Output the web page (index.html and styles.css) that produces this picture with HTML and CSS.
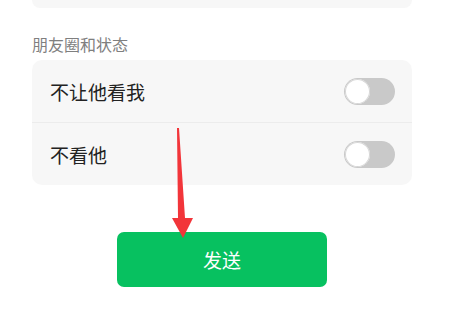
FILE: index.html
```html
<!DOCTYPE html>
<html lang="zh">
<head>
<meta charset="utf-8">
<link rel="stylesheet" href="styles.css">
</head>
<body>
<div class="page">
  <div class="card card-top"></div>
  <div class="section-label">朋友圈和状态</div>
  <div class="card">
    <div class="row">
      <span class="row-text">不让他看我</span>
      <span class="switch"><span class="knob"></span></span>
    </div>
    <div class="row">
      <span class="row-text">不看他</span>
      <span class="switch"><span class="knob"></span></span>
    </div>
  </div>
  <div class="actions">
    <button class="send">发送</button>
  </div>
  <svg class="arrow" width="40" height="120" viewBox="0 0 40 120">
    <polygon points="14,8 16,8 22,98 30,98 20,118 9,98 15,98" fill="#f2353a"/>
  </svg>
</div>
</body>
</html>
```
FILE: styles.css
```css
html, body {
  margin: 0;
  padding: 0;
  background: #ffffff;
}
.page {
  position: relative;
  width: 449px;
  height: 327px;
  overflow: hidden;
  font-family: "Noto Sans CJK SC", "Noto Sans", sans-serif;
}
.card {
  margin-left: 32px;
  width: 380px;
  background: #f7f7f7;
  border-radius: 10px;
}
.card-top {
  height: 8px;
  border-radius: 0 0 10px 10px;
}
.section-label {
  margin: 25px 0 0 32px;
  height: 27px;
  font-size: 16px;
  line-height: 22px;
  color: #7f7f7f;
}
.row {
  display: flex;
  align-items: center;
  justify-content: space-between;
  height: 62px;
  padding: 0 17px 0 18px;
}
.row + .row {
  border-top: 1px solid #ececec;
}
.row-text {
  font-size: 19px;
  color: #222222;
}
.switch {
  position: relative;
  width: 51px;
  height: 27px;
  border-radius: 14px;
  background: #c9c9c9;
  box-sizing: border-box;
}
.knob {
  position: absolute;
  left: 1px;
  top: 1px;
  width: 25px;
  height: 25px;
  border-radius: 50%;
  background: #ffffff;
  box-shadow: 0 0 0 1px #d6d6d6 inset;
}
.actions {
  margin: 47px 0 0 117px;
}
.send {
  width: 210px;
  height: 55px;
  border: none;
  border-radius: 7px;
  background: #07c160;
  color: #ffffff;
  font-family: "Noto Sans CJK SC", "Noto Sans", sans-serif;
  font-size: 19px;
  padding: 0;
}
.arrow {
  position: absolute;
  left: 163px;
  top: 120px;
}
```
